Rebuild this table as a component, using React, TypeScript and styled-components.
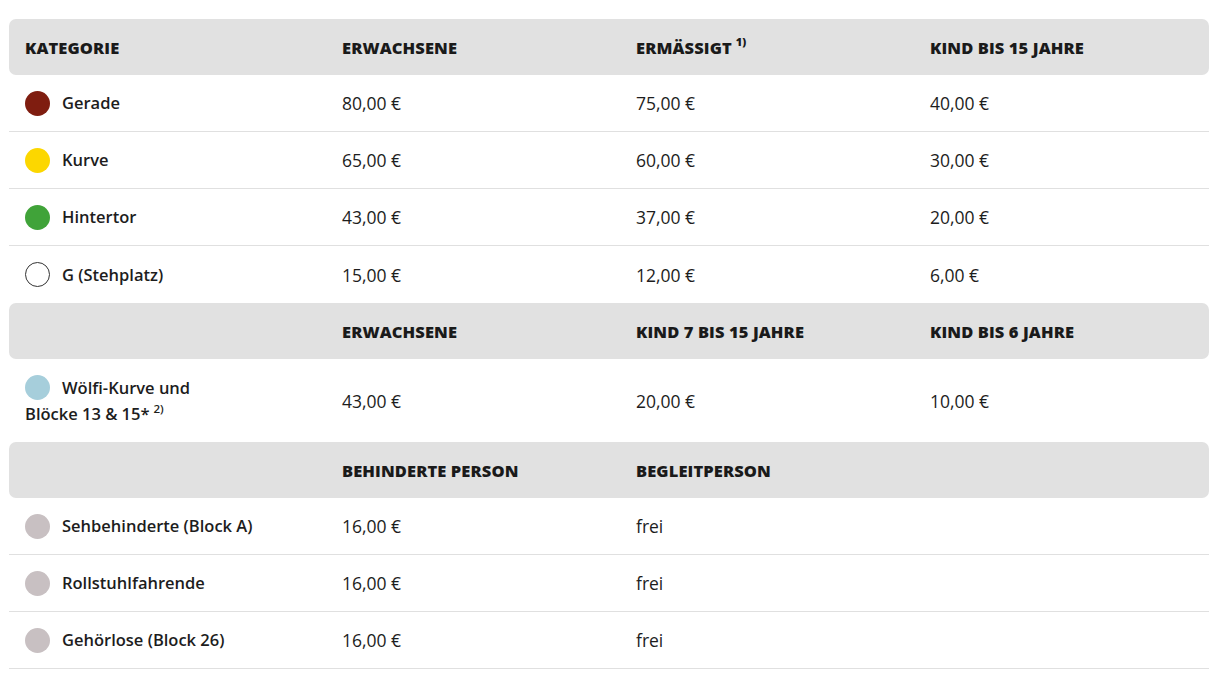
import React from "react";
import styled, { createGlobalStyle } from "styled-components";

const Global = createGlobalStyle`
  html, body { margin: 0; padding: 0; background: #fff; }
  body { font-family: "Open Sans", "Noto Sans", Arial, sans-serif; color: #1b1b1b; }
`;

const Wrap = styled.div`
  padding: 19px 15px 0 9px;
`;

const Table = styled.table`
  width: 1200px;
  border-collapse: separate;
  border-spacing: 0;
  table-layout: fixed;
`;

const HeadCell = styled.th`
  background: #e1e1e1;
  height: 56px;
  padding: 0 16px;
  text-align: left;
  font-size: 16.5px;
  font-weight: 800;
  letter-spacing: 0.1px;
  text-transform: uppercase;
  color: #1a1a1a;
  vertical-align: middle;
  &:first-child { border-radius: 7px 0 0 7px; }
  &:last-child { border-radius: 0 7px 7px 0; }
  sup { font-size: 11px; margin-left: 4px; position: relative; top: -1px; }
`;

const Row = styled.tr<{ $border?: boolean }>`
  td {
    border-bottom: ${(p) => (p.$border ? "1px solid #e0e0e0" : "none")};
  }
`;

const Cell = styled.td<{ $tall?: boolean }>`
  height: ${(p) => (p.$tall ? "83px" : "57px")};
  box-sizing: border-box;
  padding: 0 16px;
  font-size: 17.5px;
  font-weight: 400;
  color: #1d1d1d;
  vertical-align: middle;
`;

const NameCell = styled(Cell)`
  font-size: 16.5px;
  font-weight: 600;
  line-height: 26px;
  sup { font-size: 11.5px; font-weight: 600; margin-left: 4px; line-height: 0; }
`;

const Name = styled.div`
  display: flex;
  align-items: center;
  gap: 12px;
`;

const NameWrap = styled.div`
  line-height: 26px;
`;

const Dot = styled.span<{ $color: string; $outline?: boolean }>`
  display: inline-block;
  width: 25px;
  height: 25px;
  border-radius: 50%;
  flex: 0 0 auto;
  box-sizing: border-box;
  background: ${(p) => (p.$outline ? "#fff" : p.$color)};
  border: ${(p) => (p.$outline ? "1.5px solid #333" : "none")};
`;

const InlineDot = styled(Dot)`
  vertical-align: top;
  margin-right: 12px;
`;

type R = { name: string; color: string; outline?: boolean; vals: string[]; border: boolean };

const rows1: R[] = [
  { name: "Gerade", color: "#7f1d10", vals: ["80,00 €", "75,00 €", "40,00 €"], border: true },
  { name: "Kurve", color: "#fcd700", vals: ["65,00 €", "60,00 €", "30,00 €"], border: true },
  { name: "Hintertor", color: "#40a339", vals: ["43,00 €", "37,00 €", "20,00 €"], border: true },
  { name: "G (Stehplatz)", color: "#fff", outline: true, vals: ["15,00 €", "12,00 €", "6,00 €"], border: false },
];

const rows3: R[] = [
  { name: "Sehbehinderte (Block A)", color: "#c8c0c2", vals: ["16,00 €", "frei", ""], border: true },
  { name: "Rollstuhlfahrende", color: "#c8c0c2", vals: ["16,00 €", "frei", ""], border: true },
  { name: "Gehörlose (Block 26)", color: "#c8c0c2", vals: ["16,00 €", "frei", ""], border: true },
];

const renderRow = (r: R) => (
  <Row key={r.name} $border={r.border}>
    <NameCell>
      <Name>
        <Dot $color={r.color} $outline={r.outline} />
        <span>{r.name}</span>
      </Name>
    </NameCell>
    {r.vals.map((v, i) => (
      <Cell key={i}>{v}</Cell>
    ))}
  </Row>
);

export default function App() {
  return (
    <>
      <Global />
      <Wrap>
        <Table>
          <colgroup>
            <col style={{ width: "317px" }} />
            <col style={{ width: "294px" }} />
            <col style={{ width: "294px" }} />
            <col style={{ width: "295px" }} />
          </colgroup>
          <tbody>
            <tr>
              <HeadCell>Kategorie</HeadCell>
              <HeadCell>Erwachsene</HeadCell>
              <HeadCell>
                Ermässigt<sup>1)</sup>
              </HeadCell>
              <HeadCell>Kind bis 15 Jahre</HeadCell>
            </tr>
            {rows1.map(renderRow)}
            <tr>
              <HeadCell />
              <HeadCell>Erwachsene</HeadCell>
              <HeadCell>Kind 7 bis 15 Jahre</HeadCell>
              <HeadCell>Kind bis 6 Jahre</HeadCell>
            </tr>
            <Row>
              <NameCell $tall>
                <NameWrap>
                  <InlineDot $color="#a6cedb" />
                  Wölfi-Kurve und
                  <br />
                  Blöcke 13 &amp; 15*<sup>2)</sup>
                </NameWrap>
              </NameCell>
              <Cell $tall>43,00 €</Cell>
              <Cell $tall>20,00 €</Cell>
              <Cell $tall>10,00 €</Cell>
            </Row>
            <tr>
              <HeadCell />
              <HeadCell>Behinderte Person</HeadCell>
              <HeadCell>Begleitperson</HeadCell>
              <HeadCell />
            </tr>
            {rows3.map(renderRow)}
          </tbody>
        </Table>
      </Wrap>
    </>
  );
}
